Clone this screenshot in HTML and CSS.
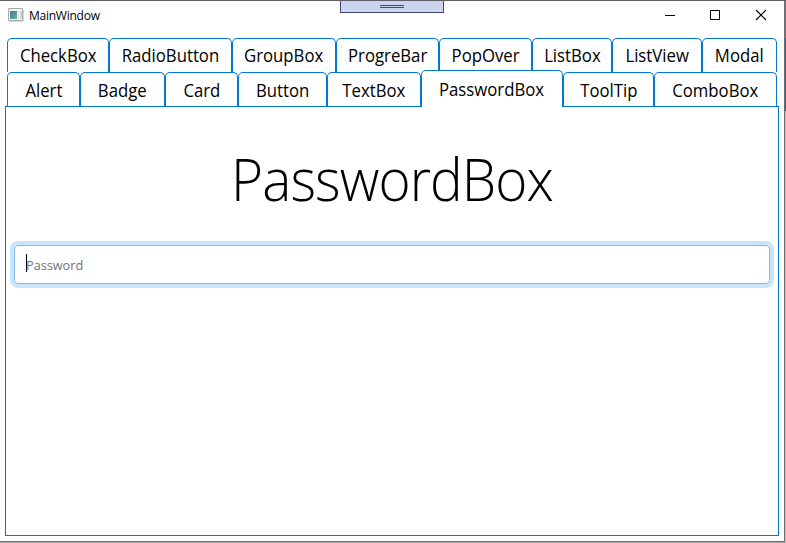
FILE: index.html
```html
<!DOCTYPE html>
<html lang="en">
<head>
<meta charset="utf-8">
<title>MainWindow</title>
<link rel="stylesheet" href="styles.css">
</head>
<body>
<div class="window">
  <header class="titlebar">
    <svg class="app-icon" width="16" height="14" viewBox="0 0 16 14">
      <defs><linearGradient id="g" x1="0" y1="0" x2="1" y2="1"><stop offset="0" stop-color="#4779a8"/><stop offset="1" stop-color="#63b783"/></linearGradient></defs>
      <path d="M.5.5h14v12H.5z" fill="#f1f3f4" stroke="#a7acae"/>
      <path d="M2 3h7v8H2z" fill="url(#g)"/><path d="M10 3h1v8h-1z" fill="#dce5e7"/><path d="M12 3h2v8h-2z" fill="#c9dadd"/>
      <path d="M1 13.5h14.5V2" fill="none" stroke="#d6d6d6"/>
    </svg>
    <span class="title">MainWindow</span>
    <svg class="controls" width="104" height="12" viewBox="0 0 104 12" fill="none" stroke="#000">
      <path d="M0 6.500h10M45.500 1.500h9v9h-9z"/><path d="M91 1l10 10M101 1l-10 10" stroke-width="1.100"/>
    </svg>
  </header>
  <div class="debug-handle"><i></i></div>
  <nav class="tabs">
    <div class="row first">
      <a class="tab"><span>CheckBox</span></a><a class="tab"><span>RadioButton</span></a><a class="tab"><span>GroupBox</span></a><a class="tab"><span>ProgreBar</span></a><a class="tab"><span>PopOver</span></a><a class="tab"><span>ListBox</span></a><a class="tab"><span>ListView</span></a><a class="tab"><span>Modal</span></a>
    </div>
    <div class="row second">
      <a class="tab"><span>Alert</span></a><a class="tab"><span>Badge</span></a><a class="tab"><span>Card</span></a><a class="tab"><span>Button</span></a><a class="tab"><span>TextBox</span></a><a class="tab active"><span>PasswordBox</span></a><a class="tab"><span>ToolTip</span></a><a class="tab"><span>ComboBox</span></a>
    </div>
  </nav>
  <main class="panel">
    <h1>PasswordBox</h1>
    <div class="field"><i class="caret"></i><span>Password</span></div>
  </main>
</div>
<div class="edge"></div>
</body>
</html>
```
FILE: styles.css
```css
* { box-sizing: border-box; }
html { height: 100%; }
body {
  margin: 0; height: 543px; overflow: hidden; display: flex;
  background: #a9a9a9; border-top: 1px solid #5d5c64;
  font-family: "Open Sans", "Noto Sans", sans-serif; color: #000;
}
.window {
  position: relative; width: 785px; height: 541px; padding: 0 5px 5px 5px;
  display: flex; flex-direction: column;
  background: #fff; border: solid #6d6d6d; border-width: 0 1px 1px 0;
}
.edge { width: 1px; height: 541px; background: linear-gradient(#777787 0 37px, #17659c 37px 110px, #c6c6c6 110px); }
.titlebar { height: 37px; display: flex; align-items: flex-start; padding: 7px 10px 0 3px; }
.app-icon { margin-right: 5px; }
.title { font-size: 12px; line-height: 16px; letter-spacing: -.25px; }
.controls { margin: 1px 0 0 auto; }
.debug-handle {
  position: absolute; left: 340px; top: -1px; width: 104px; height: 13px;
  background: #ccd5f0; border: 1px solid #404878; border-top: 0;
  display: flex; justify-content: center; padding-top: 5px;
}
.debug-handle i { width: 24px; height: 3px; border: solid #404878; border-width: 1px 0; }
.tabs { padding-left: 2px; }
.row { display: grid; height: 34px; }
.first { grid-template-columns: 102px 123px 104px 103px 93px 80px 90px 75px; }
.second { grid-template-columns: 73px 85px 73px 89px 94px 142px 91px 123px; }
.tab {
  display: flex; justify-content: center; align-items: center;
  border: 1px solid #0078d7; border-bottom: 0; border-radius: 5px 5px 0 0;
  font-size: 18px; line-height: 24px; background: #fff; white-space: nowrap;
}
.tab span { transform: scaleX(.93); padding-bottom: 1px; }
.tab.active { position: relative; height: 37px; margin-top: -2px; z-index: 1; }
.tab.active span { padding-bottom: 0; }
.panel { flex: 1; border: 1px solid #0078d7; padding: 33px 8px 0; }
h1 {
  margin: 0; height: 105px; text-align: center;
  font-size: 59px; font-weight: 300; line-height: 76px; letter-spacing: -1px;
  transform: scaleX(.93);
}
.field {
  width: 756px; height: 39px; display: flex; align-items: center; padding-left: 11px;
  border: 1px solid #80bdea; border-radius: 4px; box-shadow: 0 0 0 4px #c9e4fc;
  font-size: 13.5px; color: #6c757d;
}
.field span { margin-left: -1px; transform: scaleX(.94); transform-origin: left; }
.caret { width: 1px; height: 18px; margin-top: -3px; background: #000; }
```
